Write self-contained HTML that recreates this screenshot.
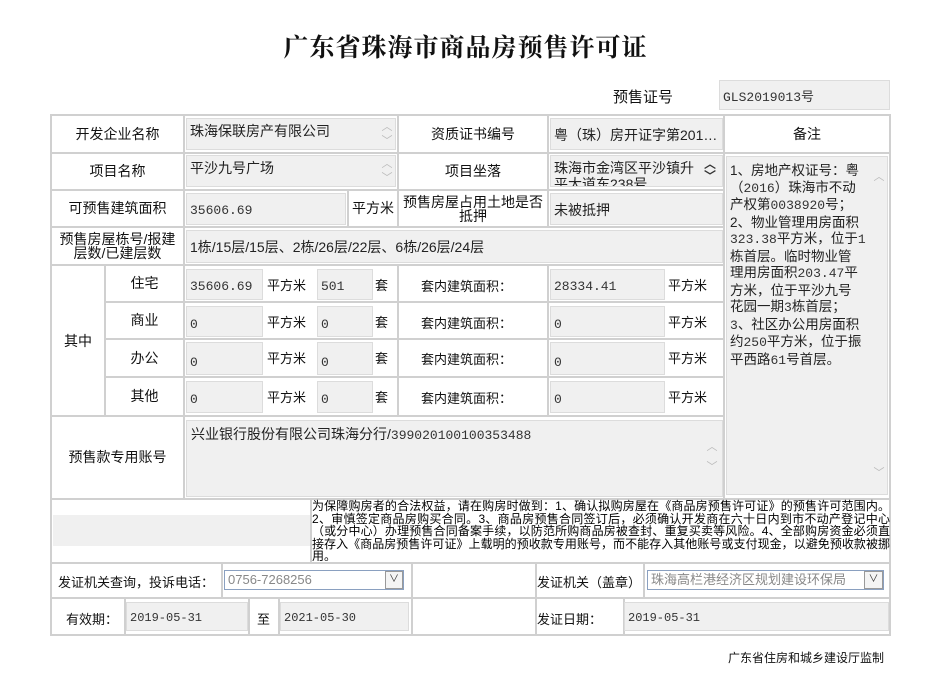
<!DOCTYPE html>
<html><head><meta charset="utf-8"><style>
*{margin:0;padding:0;box-sizing:border-box}
body{width:931px;height:695px;background:#fff;position:relative;overflow:hidden;font-family:"Liberation Sans","Noto Sans CJK SC","WenQuanYi Zen Hei",sans-serif;color:#111;font-size:14px}
div{position:absolute}
.h{height:2px;background:#d0d0d0}
.v{width:2px;background:#d0d0d0}
.l{display:flex;align-items:center;justify-content:center;text-align:center;line-height:15px}
.b{background:#f0f0f0;border:1px solid #dcdcdc;padding:4px 3px;font-size:14px;line-height:16px;color:#222;overflow:hidden;white-space:nowrap}
.n{font-family:"Liberation Mono","Noto Sans CJK SC",monospace;font-size:13px;color:#333}
.m{font-family:"Liberation Mono",monospace;font-size:13px;color:#333}
.arr{color:#bbb;font-size:11px;line-height:14px;text-align:center;width:14px}
.t{font-size:13px;white-space:nowrap}
.nl{position:static;display:block;text-align:justify;text-align-last:justify;white-space:nowrap;width:578px;height:12.6px}
</style></head><body>
<div style="left:0;top:28px;width:931px;text-align:center;font-size:25px;font-weight:bold;font-family:'Noto Serif CJK SC','Noto Sans CJK SC',serif;letter-spacing:1px">广东省珠海市商品房预售许可证</div>
<div style="left:613px;top:86px;font-size:15px">预售证号</div>
<div class="b n" style="left:719px;top:80px;width:171px;height:30px;padding-top:9px">GLS2019013号</div>

<div class="h" style="left:50px;top:114px;width:841px"></div>
<div class="h" style="left:50px;top:152px;width:674px"></div>
<div class="h" style="left:724px;top:152px;width:167px"></div>
<div class="h" style="left:50px;top:189px;width:674px"></div>
<div class="h" style="left:50px;top:226px;width:674px"></div>
<div class="h" style="left:50px;top:264px;width:674px"></div>
<div class="h" style="left:104px;top:301px;width:620px"></div>
<div class="h" style="left:104px;top:338px;width:620px"></div>
<div class="h" style="left:104px;top:376px;width:620px"></div>
<div class="h" style="left:50px;top:415px;width:674px"></div>
<div class="h" style="left:50px;top:498px;width:841px"></div>
<div class="h" style="left:50px;top:562px;width:841px"></div>
<div class="h" style="left:50px;top:597px;width:841px"></div>
<div class="h" style="left:50px;top:634px;width:841px"></div>
<div class="v" style="left:50px;top:114px;height:522px"></div>
<div class="v" style="left:889px;top:114px;height:522px"></div>
<div class="v" style="left:183px;top:114px;height:385px"></div>
<div class="v" style="left:397px;top:114px;height:76px"></div>
<div class="v" style="left:347px;top:189px;height:38px"></div>
<div class="v" style="left:397px;top:189px;height:38px"></div>
<div class="v" style="left:547px;top:114px;height:113px"></div>
<div class="v" style="left:723px;top:114px;height:385px"></div>
<div class="v" style="left:104px;top:264px;height:152px"></div>
<div class="v" style="left:397px;top:264px;height:152px"></div>
<div class="v" style="left:547px;top:264px;height:152px"></div>
<div class="v" style="left:310px;top:498px;height:65px"></div>
<div class="v" style="left:221px;top:562px;height:36px"></div>
<div class="v" style="left:411px;top:562px;height:73px"></div>
<div class="v" style="left:535px;top:562px;height:73px"></div>
<div class="v" style="left:643px;top:562px;height:36px"></div>
<div class="v" style="left:124px;top:597px;height:38px"></div>
<div class="v" style="left:248px;top:597px;height:38px"></div>
<div class="v" style="left:278px;top:597px;height:38px"></div>
<div class="v" style="left:623px;top:597px;height:38px"></div>

<div class="l" style="left:52px;top:116px;width:131px;height:36px">开发企业名称</div>
<div class="b" style="left:186px;top:118px;width:210px;height:32px">珠海保联房产有限公司</div>
<div class="arr" style="left:380px;top:120px">︿<br>﹀</div>
<div class="l" style="left:399px;top:116px;width:148px;height:36px">资质证书编号</div>
<div class="b" style="left:550px;top:118px;width:173px;height:32px;padding-top:8px">粤（珠）房开证字第201…</div>
<div class="l" style="left:725px;top:116px;width:164px;height:36px">备注</div>
<div class="l" style="left:52px;top:154px;width:131px;height:35px">项目名称</div>
<div class="b" style="left:186px;top:155px;width:210px;height:32px">平沙九号广场</div>
<div class="arr" style="left:380px;top:157px">︿<br>﹀</div>
<div class="l" style="left:399px;top:154px;width:148px;height:35px">项目坐落</div>
<div class="b" style="left:550px;top:155px;width:173px;height:32px;white-space:normal;padding-right:20px">珠海市金湾区平沙镇升平大道东238号</div>
<div style="left:704px;top:158px;font-size:12px;line-height:12px;font-weight:bold;color:#333">︿<br>﹀</div>
<div class="l" style="left:52px;top:191px;width:131px;height:35px">可预售建筑面积</div>
<div class="b n" style="left:186px;top:193px;width:160px;height:32px;padding-top:9px">35606.69</div>
<div class="l" style="left:349px;top:191px;width:48px;height:35px">平方米</div>
<div class="l" style="left:399px;top:191px;width:148px;height:35px;line-height:14px">预售房屋占用土地是否<br>抵押</div>
<div class="b" style="left:550px;top:193px;width:173px;height:32px;padding-top:8px">未被抵押</div>
<div class="l" style="left:52px;top:228px;width:131px;height:36px;line-height:14px">预售房屋栋号/报建<br>层数/已建层数</div>
<div class="b" style="left:186px;top:230px;width:537px;height:33px;padding-top:8px">1栋/15层/15层、2栋/26层/22层、6栋/26层/24层</div>

<div class="l" style="left:52px;top:266px;width:52px;height:150px">其中</div>
<div class="l" style="left:106px;top:266px;width:77px;height:35px">住宅</div>
<div class="l" style="left:106px;top:303px;width:77px;height:35px">商业</div>
<div class="l" style="left:106px;top:340px;width:77px;height:36px">办公</div>
<div class="l" style="left:106px;top:378px;width:77px;height:37px">其他</div>

<div class="b n" style="left:186px;top:269px;width:77px;height:31px;padding-top:9px">35606.69</div>
<div class="b n" style="left:186px;top:306px;width:77px;height:31px;padding-top:10px">0</div>
<div class="b n" style="left:186px;top:342px;width:77px;height:33px;padding-top:12px">0</div>
<div class="b n" style="left:186px;top:381px;width:77px;height:32px;padding-top:10px">0</div>
<div class="b n" style="left:317px;top:269px;width:56px;height:31px;padding-top:9px">501</div>
<div class="b n" style="left:317px;top:306px;width:56px;height:31px;padding-top:10px">0</div>
<div class="b n" style="left:317px;top:342px;width:56px;height:33px;padding-top:12px">0</div>
<div class="b n" style="left:317px;top:381px;width:56px;height:32px;padding-top:10px">0</div>
<div class="b n" style="left:550px;top:269px;width:115px;height:31px;padding-top:9px">28334.41</div>
<div class="b n" style="left:550px;top:306px;width:115px;height:31px;padding-top:10px">0</div>
<div class="b n" style="left:550px;top:342px;width:115px;height:33px;padding-top:12px">0</div>
<div class="b n" style="left:550px;top:381px;width:115px;height:32px;padding-top:10px">0</div>

<div class="t" style="left:267px;top:275px">平方米</div><div class="t" style="left:375px;top:275px">套</div><div class="t" style="left:421px;top:276px">套内建筑面积：</div><div class="t" style="left:668px;top:275px">平方米</div>
<div class="t" style="left:267px;top:312px">平方米</div><div class="t" style="left:375px;top:312px">套</div><div class="t" style="left:421px;top:313px">套内建筑面积：</div><div class="t" style="left:668px;top:312px">平方米</div>
<div class="t" style="left:267px;top:348px">平方米</div><div class="t" style="left:375px;top:348px">套</div><div class="t" style="left:421px;top:349px">套内建筑面积：</div><div class="t" style="left:668px;top:348px">平方米</div>
<div class="t" style="left:267px;top:387px">平方米</div><div class="t" style="left:375px;top:387px">套</div><div class="t" style="left:421px;top:388px">套内建筑面积：</div><div class="t" style="left:668px;top:387px">平方米</div>

<div class="l" style="left:52px;top:417px;width:131px;height:81px">预售款专用账号</div>
<div class="b" style="left:186px;top:420px;width:537px;height:77px;padding:5px 4px">兴业银行股份有限公司珠海分行/<span class="n">399020100100353488</span></div>
<div class="arr" style="left:705px;top:437px;line-height:20px">︿<br>﹀</div>

<div class="b" style="left:726px;top:156px;width:162px;height:339px;white-space:nowrap;font-size:13.5px;line-height:16.5px;padding:6px 3px 3px 3px">1、房地产权证号：粤<br>（<span class="m">2016</span>）珠海市不动<br>产权第<span class="m">0038920</span>号；<br>2、物业管理用房面积<br><span class="m">323.38</span>平方米，位于<span class="m">1</span><br>栋首层。临时物业管<br>理用房面积<span class="m">203.47</span>平<br>方米，位于平沙九号<br>花园一期<span class="m">3</span>栋首层；<br><span class="m">3</span>、社区办公用房面积<br>约<span class="m">250</span>平方米，位于振<br>平西路<span class="m">61</span>号首层。</div>
<div class="arr" style="left:872px;top:170px">︿</div>
<div class="arr" style="left:872px;top:466px">﹀</div>

<div style="left:53px;top:515px;width:257px;height:31px;background:#f0f0f0"></div>
<div style="left:312px;top:500px;width:578px;font-size:12px;line-height:12.6px;color:#000">
<span class="nl">为保障购房者的合法权益，请在购房时做到：1、确认拟购房屋在《商品房预售许可证》的预售许可范围内。</span>
<span class="nl">2、审慎签定商品房购买合同。3、商品房预售合同签订后，必须确认开发商在六十日内到市不动产登记中心</span>
<span class="nl">（或分中心）办理预售合同备案手续，以防范所购商品房被查封、重复买卖等风险。4、全部购房资金必须直</span>
<span class="nl">接存入《商品房预售许可证》上载明的预收款专用账号，而不能存入其他账号或支付现金，以避免预收款被挪</span>
<span style="display:block">用。</span>
</div>

<div class="t" style="left:58px;top:572px">发证机关查询，投诉电话：</div>
<div style="left:224px;top:570px;width:180px;height:20px;border:1px solid #8aa0c0;background:#fff;font-size:13px;color:#888;padding:1px 3px;line-height:16px">0756-7268256</div>
<div style="left:385px;top:571px;width:18px;height:18px;border:1px solid #999;background:#f4f4f4;font-size:10px;text-align:center;line-height:16px;color:#333">∨</div>
<div class="t" style="left:537px;top:572px">发证机关（盖章）</div>
<div style="left:647px;top:570px;width:237px;height:20px;border:1px solid #8aa0c0;background:#fff;font-size:13px;color:#888;padding:1px 3px;line-height:16px;overflow:hidden;white-space:nowrap">珠海高栏港经济区规划建设环保局</div>
<div style="left:864px;top:571px;width:19px;height:18px;border:1px solid #999;background:#f4f4f4;font-size:10px;text-align:center;line-height:16px;color:#333">∨</div>

<div class="t" style="left:66px;top:609px">有效期：</div>
<div class="b n" style="left:126px;top:602px;width:122px;height:29px;padding-top:7px;font-size:12px">2019-05-31</div>
<div class="t" style="left:257px;top:609px">至</div>
<div class="b n" style="left:280px;top:602px;width:129px;height:29px;padding-top:7px;font-size:12px">2021-05-30</div>
<div class="t" style="left:537px;top:609px">发证日期：</div>
<div class="b n" style="left:624px;top:602px;width:265px;height:29px;padding-top:7px;font-size:12px">2019-05-31</div>

<div style="left:728px;top:649px;font-size:12px">广东省住房和城乡建设厅监制</div>
</body></html>
